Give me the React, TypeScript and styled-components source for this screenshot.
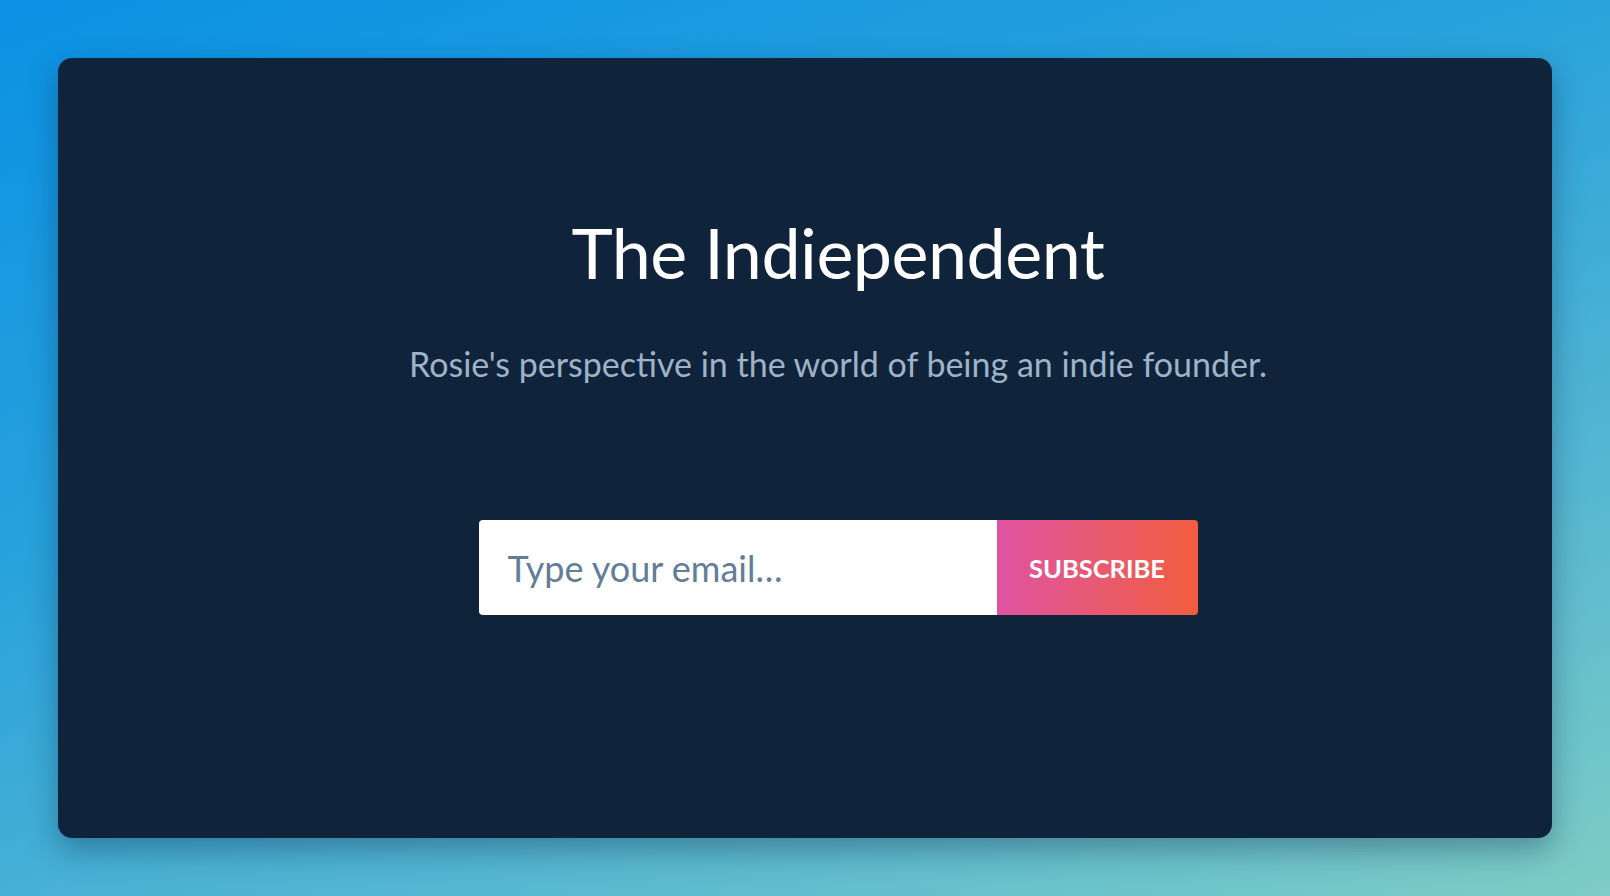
import styled, { createGlobalStyle } from 'styled-components';

const GlobalStyle = createGlobalStyle`
    html, body {
        margin: 0;
        padding: 0;
        height: 100%;
    }

    body {
        font-family: Lato, "Open Sans", sans-serif;
        background: linear-gradient(160deg, #0a91e4 0%, #2aa3dc 40%, #54b6d2 70%, #7ecdc5 100%);
        min-height: 896px;
    }
`;

const Page = styled.div`
    box-sizing: border-box;
    width: 100%;
    height: 896px;
    padding: 58px;
`;

const Card = styled.section`
    box-sizing: border-box;
    height: 780px;
    background: #0f233b;
    border-radius: 14px;
    box-shadow: 0 12px 30px rgba(10, 30, 60, 0.35);
    display: flex;
    flex-direction: column;
    align-items: center;
    padding: 159px 0 0 66px;
`;

const Title = styled.h1`
    margin: 0;
    color: #ffffff;
    font-weight: 400;
    font-size: 70px;
    line-height: 1;
    letter-spacing: -0.5px;
`;

const Subtitle = styled.p`
    margin: 60px 0 0 0;
    color: #9fb3c8;
    font-size: 34px;
    line-height: 1;
`;

const Form = styled.form`
    display: flex;
    margin-top: 139px;
    height: 95px;
`;

const EmailInput = styled.input`
    box-sizing: border-box;
    width: 518px;
    height: 100%;
    border: none;
    outline: none;
    border-radius: 4px 0 0 4px;
    padding: 0 0 0 29px;
    font-family: Lato, "Open Sans", sans-serif;
    font-size: 36px;
    color: #243b53;
    background: #ffffff;

    &::placeholder {
        color: #627d98;
    }
`;

const SubscribeButton = styled.button`
    width: 201px;
    height: 100%;
    border: none;
    border-radius: 0 4px 4px 0;
    background: linear-gradient(90deg, #df53a1 0%, #e95a6c 55%, #f25c3f 100%);
    color: #ffffff;
    font-family: Lato, "Open Sans", sans-serif;
    font-weight: 700;
    font-size: 25.5px;
    text-transform: uppercase;
    cursor: pointer;
`;

export default function App() {
    return (
        <>
            <GlobalStyle />
            <Page>
                <Card>
                    <Title>The Indiependent</Title>
                    <Subtitle>Rosie's perspective in the world of being an indie founder.</Subtitle>
                    <Form onSubmit={(e) => e.preventDefault()}>
                        <EmailInput type="email" placeholder="Type your email…" />
                        <SubscribeButton type="submit">Subscribe</SubscribeButton>
                    </Form>
                </Card>
            </Page>
        </>
    );
}
